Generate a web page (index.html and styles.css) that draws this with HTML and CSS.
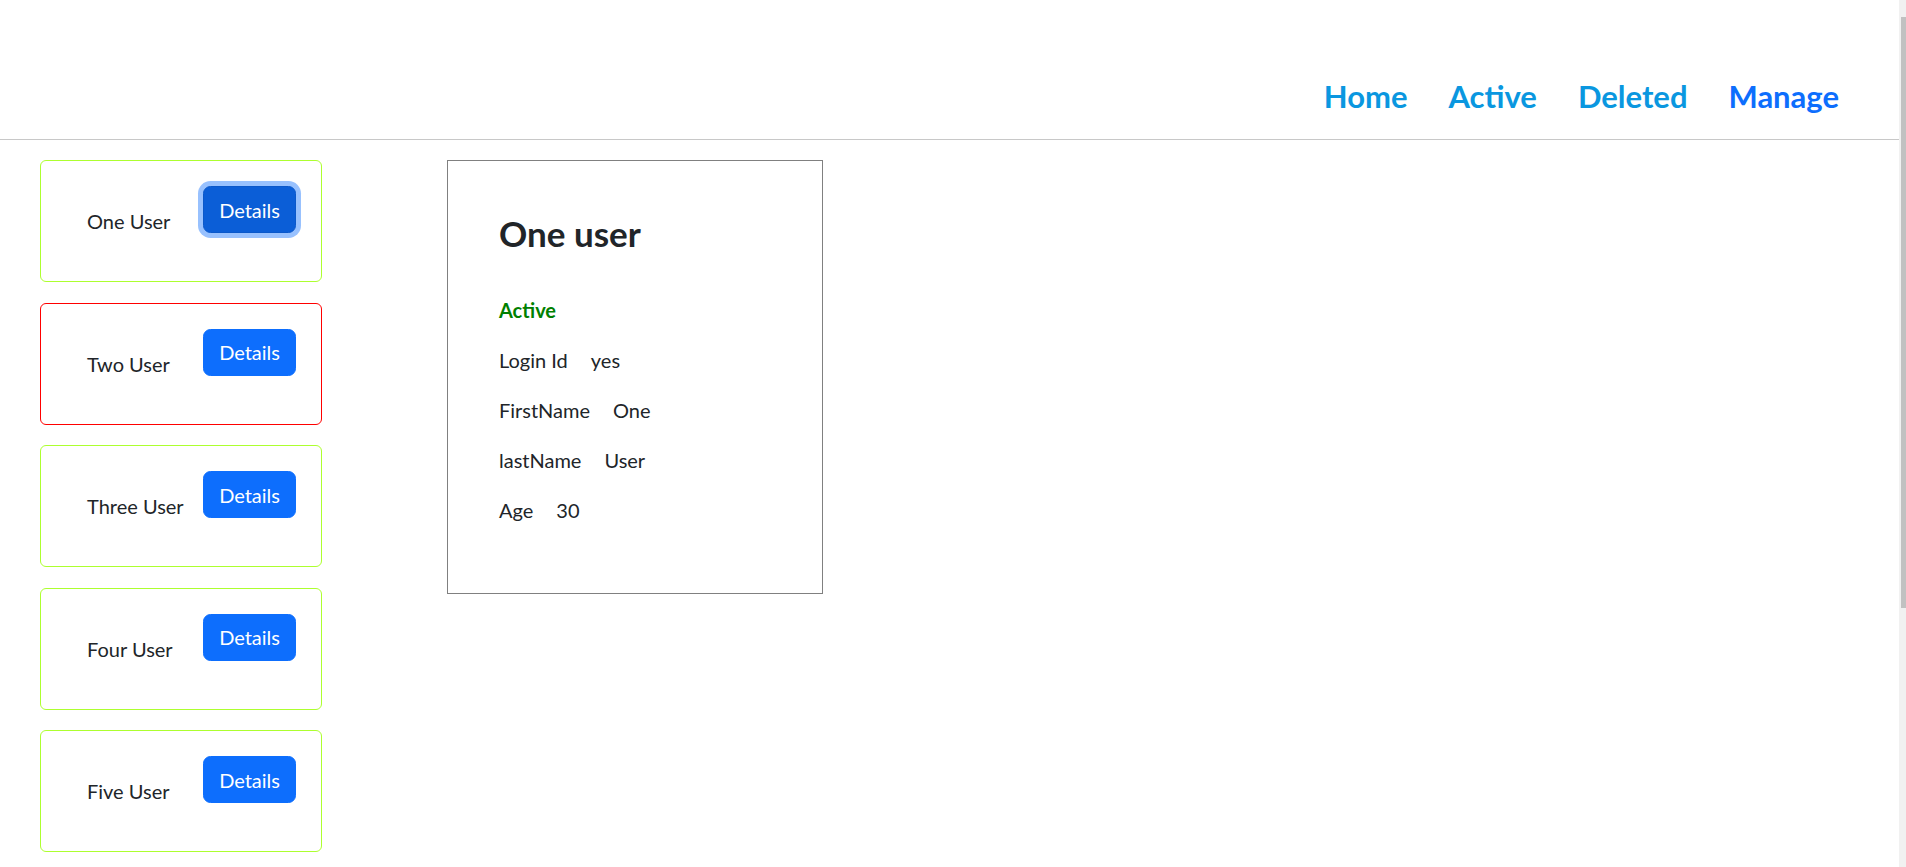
FILE: index.html
```html
<!DOCTYPE html>
<html lang="en">
<head>
<meta charset="utf-8">
<title>Users</title>
<link rel="stylesheet" href="styles.css">
</head>
<body>
<header class="topbar">
  <nav class="nav">
    <a class="nav-link" href="#">Home</a>
    <a class="nav-link" href="#">Active</a>
    <a class="nav-link" href="#">Deleted</a>
    <a class="nav-link nav-link-current" href="#">Manage</a>
  </nav>
</header>
<main class="main">
  <section class="user-list">
    <div class="user-card user-card-active">
      <p class="user-name">One User</p>
      <button class="btn btn-focused" type="button">Details</button>
    </div>
    <div class="user-card user-card-deleted">
      <p class="user-name">Two User</p>
      <button class="btn" type="button">Details</button>
    </div>
    <div class="user-card user-card-active">
      <p class="user-name">Three User</p>
      <button class="btn" type="button">Details</button>
    </div>
    <div class="user-card user-card-active">
      <p class="user-name">Four User</p>
      <button class="btn" type="button">Details</button>
    </div>
    <div class="user-card user-card-active">
      <p class="user-name">Five User</p>
      <button class="btn" type="button">Details</button>
    </div>
  </section>
  <section class="detail">
    <h3 class="detail-title">One user</h3>
    <p class="detail-status">Active</p>
    <p class="detail-row"><span class="detail-label">Login Id</span><span class="detail-value">yes</span></p>
    <p class="detail-row"><span class="detail-label">FirstName</span><span class="detail-value">One</span></p>
    <p class="detail-row"><span class="detail-label">lastName</span><span class="detail-value">User</span></p>
    <p class="detail-row"><span class="detail-label">Age</span><span class="detail-value">30</span></p>
  </section>
</main>
<div class="scrollbar"><div class="scrollbar-thumb"></div></div>
</body>
</html>
```

FILE: styles.css
```css
html {
  overflow: hidden;
}

body {
  margin: 0;
  font-family: Lato, "Open Sans", sans-serif;
  font-size: 20px;
  line-height: 1.5;
  color: #212529;
  background: #fff;
}

.topbar {
  display: flex;
  justify-content: flex-end;
  padding: 78px 67px 25px 0;
  border-bottom: 1px solid #c8c8c8;
}

.nav {
  display: flex;
  gap: 41px;
}

.nav-link {
  font-size: 31px;
  line-height: 36px;
  font-weight: 700;
  color: #0a97e0;
  text-decoration: none;
}

.nav-link-current {
  color: #0d6efd;
}

.main {
  display: flex;
  align-items: flex-start;
  padding: 20px 0 0 40px;
}

.user-list {
  display: flex;
  flex-direction: column;
  gap: 20.6px;
  width: 282px;
}

.user-card {
  box-sizing: border-box;
  height: 122px;
  display: flex;
  justify-content: space-between;
  align-items: flex-start;
  padding: 25px 25px 0 46px;
  border: 1px solid #adff2f;
  border-radius: 6px;
}

.user-card-deleted {
  border-color: #ff0000;
}

.user-name {
  margin: 20px 0 0;
}

.btn {
  font-family: inherit;
  font-size: 20px;
  line-height: 30px;
  padding: 7.5px 15px;
  border: 1px solid #0d6efd;
  border-radius: 7.5px;
  background: #0d6efd;
  color: #fff;
  cursor: pointer;
}

.btn-focused {
  background: #0b5ed7;
  border-color: #0a58ca;
  box-shadow: 0 0 0 5px rgba(49, 132, 253, 0.5);
}

.detail {
  box-sizing: border-box;
  width: 376px;
  height: 434px;
  margin-left: 125px;
  padding: 51px 51px 0;
  border: 1px solid #808080;
}

.detail-title {
  margin: 0 0 41px;
  font-size: 35px;
  line-height: 42px;
  font-weight: 700;
}

.detail-status {
  margin: 0 0 20px;
  font-weight: 700;
  color: #008000;
}

.detail-row {
  margin: 0 0 20px;
}

.detail-value {
  margin-left: 23px;
}

.scrollbar {
  position: fixed;
  top: 0;
  right: 0;
  width: 7px;
  height: 100%;
  background: #f1f1f1;
}

.scrollbar-thumb {
  position: absolute;
  top: 17px;
  left: 2px;
  width: 5px;
  height: 591px;
  background: #c1c1c1;
}
```
